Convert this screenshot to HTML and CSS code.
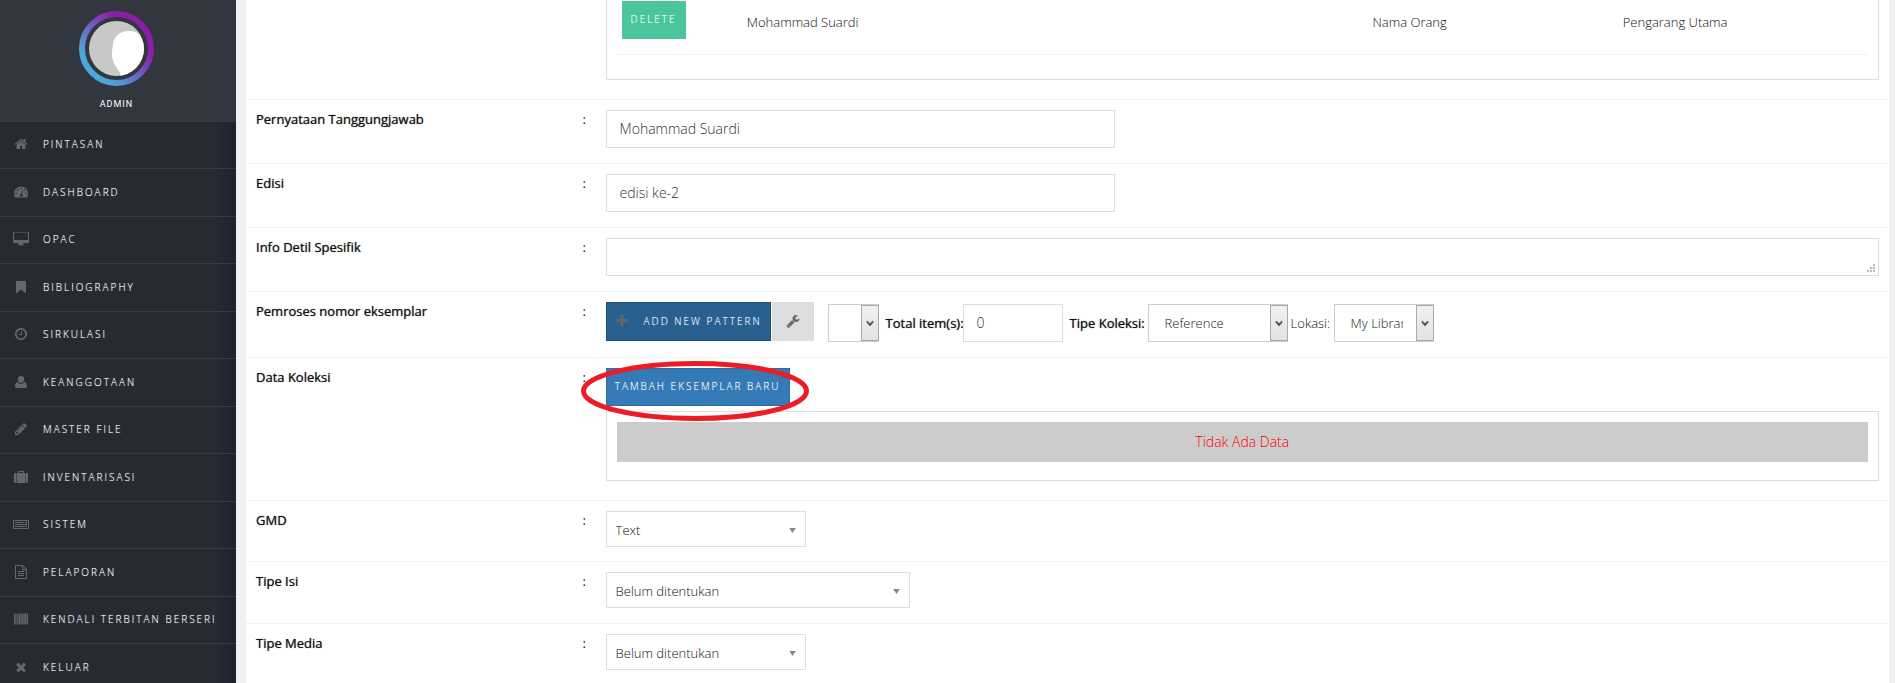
FILE: index.html
```html
<!DOCTYPE html>
<html lang="id">
<head>
<meta charset="utf-8">
<title>Bibliography</title>
<link rel="stylesheet" href="styles.css">
</head>
<body>
<div class="app">
  <aside class="sidebar">
    <div class="profile">
      <svg class="avatar" viewBox="0 0 75 75" role="img" aria-label="Admin">
        <defs>
          <linearGradient id="ring" x1="0.15" y1="0.85" x2="0.85" y2="0.15">
            <stop offset="0" stop-color="#4aa8dc"/>
            <stop offset="0.1" stop-color="#4da5dc"/>
            <stop offset="0.8" stop-color="#8a1fa8"/>
            <stop offset="1" stop-color="#8c1ca5"/>
          </linearGradient>
          <clipPath id="face"><circle cx="37.500" cy="37.500" r="27.500"/></clipPath>
        </defs>
        <circle cx="37.500" cy="37.500" r="34.500" fill="none" stroke="url(#ring)" stroke-width="6"/>
        <circle cx="37.500" cy="37.500" r="27.500" fill="#c8c8c8"/>
        <path clip-path="url(#face)" fill="#fff" d="M34 34C34 26 41 20 50 20C56 20 60 22 62 26L68 40L60 66H41C42 63 41 61 39 59C35 53 32 47 33 40Z"/>
      </svg>
      <span class="profile-name">ADMIN</span>
    </div>
    <nav>
      <ul class="menu">
        <li><a href="#"><svg class="icon" viewBox="0 0 1792 1792"><path d="M1472 992v480q0 26-19 45t-45 19h-384v-384h-256v384h-384q-26 0-45-19t-19-45v-480q0-1 .5-3t.5-3l575-474 575 474q1 2 1 6zm223-69l-62 74q-8 9-21 11h-3q-13 0-21-7l-692-577-692 577q-12 8-24 7-13-2-21-11l-62-74q-8-10-7-23.500t11-21.500l719-599q32-26 76-26t76 26l244 204v-195q0-14 9-23t23-9h192q14 0 23 9t9 23v408l219 182q10 8 11 21.500t-7 23.500z"/></svg>PINTASAN</a></li>
        <li><a href="#"><svg class="icon" viewBox="0 0 14 14"><path fill-rule="evenodd" d="M7 1.500A7 7 0 0 0 0 8.500C0 10 .4 11.200 1.100 12.500H12.900C13.600 11.200 14 10 14 8.500A7 7 0 0 0 7 1.500ZM2 7.700a.8 .8 0 1 0 0 1.600a.8 .8 0 0 0 0-1.600ZM3.500 4.200a.8 .8 0 1 0 0 1.600a.8 .8 0 0 0 0-1.600ZM7 2.700a.8 .8 0 1 0 0 1.600a.8 .8 0 0 0 0-1.600ZM10.500 4.200a.8 .8 0 1 0 0 1.600a.8 .8 0 0 0 0-1.600ZM12 7.700a.8 .8 0 1 0 0 1.600a.8 .8 0 0 0 0-1.600ZM8.200 5.500L7.200 9A1.300 1.300 0 1 0 8 9.200L9 5.700Z"/></svg>DASHBOARD</a></li>
        <li><a href="#"><svg class="icon icon-wide" viewBox="-64 64 1920 1680"><path d="M1728 992v-832q0-13-9.500-22.500t-22.500-9.500h-1600q-13 0-22.500 9.500t-9.500 22.500v832q0 13 9.500 22.500t22.500 9.500h1600q13 0 22.500-9.500t9.500-22.500zm128-832v1088q0 66-47 113t-113 47h-544q0 37 16 77.500t32 71 16 43.500q0 26-19 45t-45 19h-512q-26 0-45-19t-19-45q0-14 16-44t32-70 16-78h-544q-66 0-113-47t-47-113v-1088q0-66 47-113t113-47h1600q66 0 113 47t47 113z"/></svg>OPAC</a></li>
        <li><a href="#"><svg class="icon" viewBox="0 0 1792 1792"><path d="M1420 128q23 0 44 9 33 13 52.500 41t19.500 62v1289q0 34-19.500 62t-52.500 41q-19 8-44 8-48 0-83-32l-441-424-441 424q-36 33-83 33-23 0-44-9-33-13-52.500-41t-19.500-62v-1289q0-34 19.500-62t52.500-41q21-9 44-9h1048z"/></svg>BIBLIOGRAPHY</a></li>
        <li><a href="#"><svg class="icon" viewBox="0 0 1792 1792"><path d="M1024 544v448q0 14-9 23t-23 9h-320q-14 0-23-9t-9-23v-64q0-14 9-23t23-9h224v-352q0-14 9-23t23-9h64q14 0 23 9t9 23zm416 352q0-148-73-273t-198-198-273-73-273 73-198 198-73 273 73 273 198 198 273 73 273-73 198-198 73-273zm224 0q0 209-103 385.500t-279.500 279.500-385.500 103-385.500-103-279.500-279.500-103-385.500 103-385.500 279.500-279.500 385.500-103 385.500 103 279.500 279.500 103 385.500z"/></svg>SIRKULASI</a></li>
        <li><a href="#"><svg class="icon" viewBox="0 0 14 14"><path d="M7 1a3.200 3.200 0 0 0-3.200 3.400C3.800 6.600 5.200 8 7 8s3.200-1.400 3.200-3.600A3.200 3.200 0 0 0 7 1ZM3.600 7C2 7.300 1 9 1 11c0 1.200.8 2 2 2h8c1.200 0 2-.8 2-2 0-2-1-3.700-2.600-4C9.500 8.200 8.400 8.900 7 8.900S4.500 8.200 3.600 7Z"/></svg>KEANGGOTAAN</a></li>
        <li><a href="#"><svg class="icon" viewBox="0 0 1792 1792"><path d="M491 1536l91-91-235-235-91 91v107h128v128h107zm523-928q0-22-22-22-10 0-17 7l-542 542q-7 7-7 17 0 22 22 22 10 0 17-7l542-542q7-7 7-17zm-54-192l416 416-832 832h-416v-416zm683 96q0 53-37 90l-166 166-416-416 166-165q36-38 90-38 53 0 91 38l235 234q37 39 37 91z"/></svg>MASTER FILE</a></li>
        <li><a href="#"><svg class="icon" viewBox="0 0 14 14"><path fill-rule="evenodd" d="M4 3V1.600C4 1.200 4.300 1 4.600 1H9.400C9.800 1 10 1.200 10 1.600V3H11.300V13H2.700V3ZM5 3H9V2H5ZM2.200 3V13H1.200C.5 13 0 12.500 0 11.800V4.200C0 3.500.5 3 1.200 3ZM11.800 3H12.800C13.500 3 14 3.500 14 4.200V11.800C14 12.500 13.500 13 12.800 13H11.800Z"/></svg>INVENTARISASI</a></li>
        <li><a href="#"><svg class="icon icon-wide" viewBox="0 0 16 14"><path fill-rule="evenodd" d="M1 3H15Q16 3 16 4V11Q16 12 15 12H1Q0 12 0 11V4Q0 3 1 3ZM1 4V11H15V4ZM2 5H11V6H2ZM12 5H14V8H2V7H13V6H12ZM2 9H3.500V10H2ZM4 9H12V10H4ZM12.500 9H14V10H12.500Z"/></svg>SISTEM</a></li>
        <li><a href="#"><svg class="icon" viewBox="0 0 14 14"><path fill-rule="evenodd" d="M1 .7Q1 0 1.700 0H8.700L13 4.300V13.300Q13 14 12.300 14H1.700Q1 14 1 13.300ZM2 1V13H12V5.300H8.500Q8 5.300 8 4.800V1ZM9 1.400V4.300H11.800ZM4 6H10V7H4ZM4 8H10V9H4ZM4 10H10V11H4Z"/></svg>PELAPORAN</a></li>
        <li><a href="#"><svg class="icon" viewBox="0 0 14 14"><path d="M0 1.500H1V12.500H0ZM1.400 1.500H2.200V12.500H1.400ZM2.600 1.500H3.400V12.500H2.600ZM3.800 1.500H4.600V12.500H3.800ZM5 1.500H6.200V12.500H5ZM6.700 1.500H7.700V12.500H6.700ZM8.100 1.500H9.200V12.500H8.100ZM9.600 1.500H10.500V12.500H9.600ZM10.800 1.500H11.900V12.500H10.800ZM12.200 1.500H12.700V12.500H12.200ZM13 1.500H14V12.500H13Z"/></svg>KENDALI TERBITAN BERSERI</a></li>
        <li><a href="#"><svg class="icon" viewBox="0 0 1792 1792"><path d="M1490 1322q0 40-28 68l-136 136q-28 28-68 28t-68-28l-294-294-294 294q-28 28-68 28t-68-28l-136-136q-28-28-28-68t28-68l294-294-294-294q-28-28-28-68t28-68l136-136q28-28 68-28t68 28l294 294 294-294q28-28 68-28t68 28l136 136q28 28 28 68t-28 68l-294 294 294 294q28 28 28 68z"/></svg>KELUAR</a></li>
      </ul>
    </nav>
  </aside>

  <main class="content">
    <form class="form">
      <div class="row row-first">
        <div class="field">
          <div class="box box-authors">
            <table class="authors">
              <tr>
                <td class="col-action"><button type="button" class="btn btn-delete">DELETE</button></td>
                <td class="col-name">Mohammad Suardi</td>
                <td class="col-type">Nama Orang</td>
                <td class="col-type">Pengarang Utama</td>
              </tr>
            </table>
          </div>
        </div>
      </div>

      <div class="row">
        <label class="name" for="sor">Pernyataan Tanggungjawab</label><span class="colon">:</span>
        <div class="field"><input class="text" type="text" id="sor" value="Mohammad Suardi"></div>
      </div>

      <div class="row">
        <label class="name" for="edition">Edisi</label><span class="colon">:</span>
        <div class="field"><input class="text" type="text" id="edition" value="edisi ke-2"></div>
      </div>

      <div class="row">
        <label class="name" for="detail">Info Detil Spesifik</label><span class="colon">:</span>
        <div class="field">
          <div class="area">
            <textarea class="text text-full" id="detail" rows="1"></textarea>
            <svg class="grip" viewBox="0 0 8 8"><path d="M6 0h2v2H6zM3 3h2v2H3zM6 3h2v2H6zM0 6h2v2H0zM3 6h2v2H3zM6 6h2v2H6z"/></svg>
          </div>
        </div>
      </div>

      <div class="row">
        <label class="name" for="pattern">Pemroses nomor eksemplar</label><span class="colon">:</span>
        <div class="field pattern">
          <div class="btn-group">
            <button type="button" class="btn btn-pattern"><svg class="icon" viewBox="0 0 1792 1792"><path d="M1600 736v192q0 40-28 68t-68 28h-416v416q0 40-28 68t-68 28h-192q-40 0-68-28t-28-68v-416h-416q-40 0-68-28t-28-68v-192q0-40 28-68t68-28h416v-416q0-40 28-68t68-28h192q40 0 68 28t28 68v416h416q40 0 68 28t28 68z"/></svg>ADD NEW PATTERN</button>
            <button type="button" class="btn btn-tool" aria-label="Pattern settings"><svg class="icon" viewBox="0 0 1792 1792"><path d="M448 1472q0-26-19-45t-45-19-45 19-19 45 19 45 45 19 45-19 19-45zm644-420l-682 682q-37 37-90 37-52 0-91-37l-106-108q-38-36-38-90 0-53 38-91l681-681q39 98 114.500 173.500t173.500 114.500zm634-435q0 39-23 106-47 134-164.500 217.500t-258.500 83.500q-185 0-316.500-131.500t-131.500-316.500 131.500-316.500 316.500-131.500q58 0 121.500 16.500t107.500 46.500q16 11 16 28t-16 28l-293 169v224l193 107q5-3 79-48.500t135.500-81 70.500-35.500q15 0 23.500 10t8.500 25z"/></svg></button>
          </div>
          <span class="combo combo-pattern">
            <select id="pattern"><option></option></select>
            <span class="combo-arrow"><svg viewBox="0 0 8 8"><path d="M1 2v1.500L4 7l3-3.500V2L4 4.500z" stroke-width=".8"/></svg></span>
          </span>
          <label class="strong total" for="total">Total item(s):</label>
          <input class="text text-total" type="text" id="total" value="0">
          <label class="strong type" for="coll">Tipe Koleksi:</label>
          <span class="combo combo-type">
            <select id="coll"><option>Reference</option></select>
            <span class="combo-arrow"><svg viewBox="0 0 8 8"><path d="M1 2v1.500L4 7l3-3.500V2L4 4.500z" stroke-width=".8"/></svg></span>
          </span>
          <label class="location" for="loc">Lokasi:</label>
          <span class="combo combo-location">
            <select id="loc"><option>My Library</option></select>
            <span class="combo-arrow"><svg viewBox="0 0 8 8"><path d="M1 2v1.500L4 7l3-3.500V2L4 4.500z" stroke-width=".8"/></svg></span>
          </span>
        </div>
      </div>

      <div class="row row-items">
        <span class="name">Data Koleksi</span><span class="colon">:</span>
        <div class="field">
          <div class="callout">
            <button type="button" class="btn btn-item">TAMBAH EKSEMPLAR BARU</button>
            <svg class="callout-ring" viewBox="0 0 228 60"><ellipse cx="114" cy="30" rx="111.500" ry="27.500"/></svg>
          </div>
          <div class="box box-items"><div class="empty">Tidak Ada Data</div></div>
        </div>
      </div>

      <div class="row row-gmd">
        <label class="name" for="gmd">GMD</label><span class="colon">:</span>
        <div class="field"><span class="chosen"><select id="gmd"><option>Text</option></select><svg viewBox="0 0 8 6"><path d="M0 0h8L4 6z"/></svg></span></div>
      </div>

      <div class="row">
        <label class="name" for="content-type">Tipe Isi</label><span class="colon">:</span>
        <div class="field"><span class="chosen chosen-wide"><select id="content-type"><option>Belum ditentukan</option></select><svg viewBox="0 0 8 6"><path d="M0 0h8L4 6z"/></svg></span></div>
      </div>

      <div class="row">
        <label class="name" for="media-type">Tipe Media</label><span class="colon">:</span>
        <div class="field"><span class="chosen"><select id="media-type"><option>Belum ditentukan</option></select><svg viewBox="0 0 8 6"><path d="M0 0h8L4 6z"/></svg></span></div>
      </div>
    </form>
  </main>
</div>
</body>
</html>
```
FILE: styles.css
```css
* { box-sizing: border-box; }

body {
  margin: 0;
  background: #f1f1f1;
  color: #111;
  font: 300 13px/18px "Open Sans", "Noto Sans", sans-serif;
}

button, input, select, textarea { font: inherit; color: inherit; border-radius: 0; margin: 0; }

.app { display: flex; height: 100vh; overflow: hidden; }

/* Sidebar */
.sidebar {
  flex: none;
  width: 236px;
  background: linear-gradient(to right, #272a31 216px, #20232b);
}

.profile {
  display: flex;
  flex-direction: column;
  align-items: center;
  padding: 11px 3px 9px 0;
  background: #32363f;
}
.avatar { width: 75px; height: 75px; }
.profile-name {
  margin-top: 10px;
  font: 400 9px/16px Roboto, sans-serif;
  letter-spacing: 1px;
  color: #fff;
}

.menu { list-style: none; margin: 0; padding: 0; border-top: 1px solid #383b41; }
.menu a {
  display: flex;
  align-items: center;
  height: 47px;
  padding: 0 0 2px 14px;
  border-bottom: 1px solid #383b41;
  color: #fff;
  font-size: 10px;
  letter-spacing: 2px;
  text-decoration: none;
  text-shadow: 0 0 1px rgba(255, 255, 255, 0.5);
  white-space: nowrap;
}
.menu li:nth-child(even) a { height: 48px; }
.icon { flex: none; width: 14px; height: 14px; fill: #65676c; }
.menu .icon { margin-right: 15px; }
.menu .icon-wide { width: 16px; margin-left: -1px; margin-right: 14px; }

/* Form rows */
.content {
  flex: 1;
  min-width: 0;
  margin: 0 6px 0 10px;
  background: #fff;
}
.row {
  display: grid;
  grid-template-columns: 20% 21px 1fr;
  border-bottom: 1px solid #f0f0f0;
}
.name { padding: 10px; }
.name, .strong { font-weight: 500; text-shadow: 0 0 1px #555; }
.colon { padding: 10px 0 10px 8px; font-weight: 400; }
.field { grid-column: 3; min-width: 0; padding: 10px 10px 15px; }
.row-first .field { padding-top: 0; padding-bottom: 19px; }
.row-items .field { padding-bottom: 19px; }
.row-gmd .field { padding-bottom: 14px; }

.text {
  display: block;
  width: 40%;
  height: 38px;
  padding: 0 13px;
  border: 1px solid #ddd;
  background: #fff;
  color: #333;
  font-size: 14px;
}
.text-full { width: 100%; resize: none; }
.area { position: relative; }
.grip { position: absolute; right: 4px; bottom: 4px; width: 8px; height: 8px; fill: #bbb; }

.btn {
  height: 38px;
  padding: 0 9px;
  border: 0;
  color: #fff;
  font-size: 10px;
  letter-spacing: 2px;
  text-shadow: 0 0 1px rgba(255, 255, 255, 0.5);
  white-space: nowrap;
}
.btn-delete { width: 64px; padding-bottom: 2px; background: #4bc59c; }

.box { border: 1px solid #ddd; }
.box-authors { border-top: 0; padding: 0 10px 24px; }
.authors { width: 100%; table-layout: fixed; border-collapse: collapse; }
.authors td {
  height: 54px;
  padding: 5px 5px 14px;
  border-bottom: 1px solid #f0f0f0;
}
.authors .col-action { padding-top: 1px; }
.authors .btn { display: block; }
.col-action { width: 10%; }
.col-name { width: 50%; }
.col-type { width: 20%; }

/* Item code pattern */
.pattern { display: flex; align-items: flex-end; }
.btn-group { display: flex; gap: 1px; align-self: flex-start; margin-right: 14px; }
.pattern .btn { display: flex; align-items: center; height: 39px; padding: 0 8px 1px; margin-bottom: 1px; }
.pattern .btn-pattern { width: 165px; background: #286090; border: 1px solid #204d74; }
.btn-pattern .icon { margin-right: 15px; fill: #666; }
.pattern .btn-tool { width: 42px; justify-content: center; background: #ddd; }
.pattern label { padding-bottom: 10px; white-space: nowrap; }
.total { width: 77px; margin-left: 7px; }
.text-total { width: 100px; }
.type { width: 78px; margin-left: 7px; }
.location { width: 43px; margin-left: 3px; }

.combo { position: relative; display: block; height: 38px; }
.combo-pattern { width: 51px; }
.combo-type { width: 140px; }
.combo-location { width: 100px; }
.combo select {
  width: 100%;
  height: 100%;
  padding: 0 30px 0 16px;
  appearance: none;
  border: 1px solid #ccc;
  background: #fff;
  color: #222;
}
.combo-arrow {
  position: absolute;
  top: 1px;
  right: 0;
  bottom: 1px;
  width: 18px;
  display: flex;
  align-items: center;
  justify-content: center;
  border: 1px solid #aaa;
  background: linear-gradient(#f0f0f0, #e2e2e2);
  pointer-events: none;
}
.combo-arrow svg { width: 8px; height: 8px; fill: #555; stroke: #555; }

/* Items */
.callout { position: relative; display: flex; margin-bottom: 5px; }
.btn-item { background: #337ab7; border: 1px solid #2e6da4; width: 184px; padding: 0 8px 2px; }
.callout-ring {
  position: absolute;
  left: -25px;
  top: -7px;
  width: 228px;
  height: 60px;
  fill: none;
  stroke: #ed1c24;
  stroke-width: 5;
  pointer-events: none;
}
.box-items { padding: 10px 10px 18px; }
.empty {
  padding: 11px;
  background: #ccc;
  color: #f00;
  text-align: center;
  font-size: 14px;
}

.chosen { position: relative; display: block; width: 200px; height: 36px; }
.chosen-wide { width: 304px; }
.chosen select {
  width: 100%;
  height: 100%;
  padding: 2px 30px 0 9px;
  appearance: none;
  border: 1px solid #ddd;
  background: #fff;
  color: #111;
}
.chosen svg { position: absolute; right: 10px; top: 17px; width: 7px; height: 5px; fill: #888; }
```
